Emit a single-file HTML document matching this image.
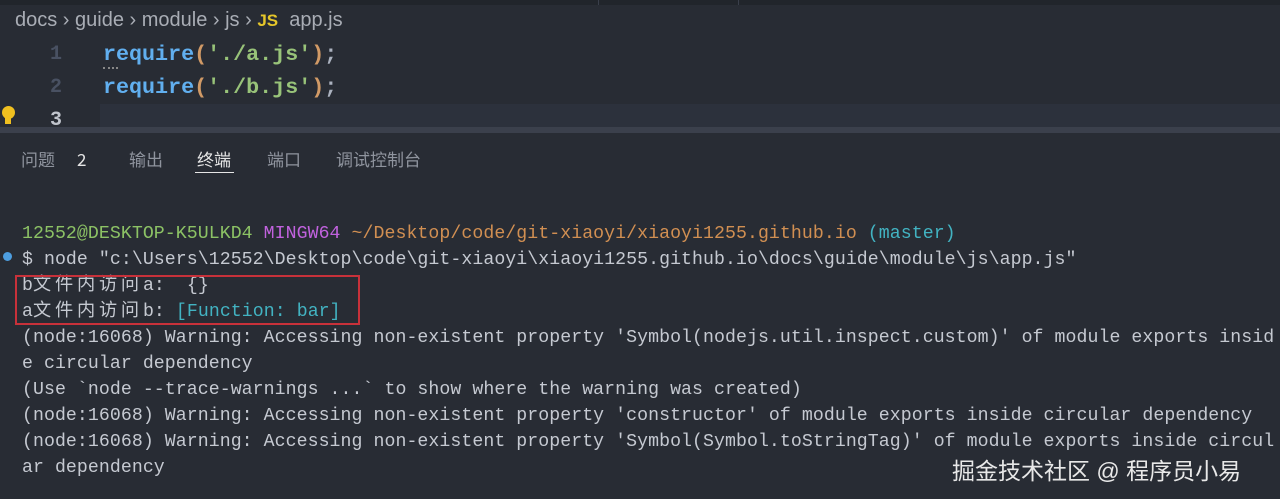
<!DOCTYPE html>
<html><head><meta charset="utf-8"><style>
body{margin:0;width:1280px;height:499px;background:#282c34;overflow:hidden;position:relative;font-family:"Liberation Sans","Noto Sans CJK SC",sans-serif}
.top{position:absolute;left:0;top:0;width:1280px;height:5px;background:#21252b}
.top i{position:absolute;top:0;width:1px;height:5px;background:#3a3f4b}
.bc{position:absolute;left:15px;top:9px;font-size:20px;color:#a9adb5;white-space:pre}
.code{position:absolute;font-family:"Liberation Mono",monospace;font-size:21.7px;font-weight:bold;white-space:pre}
.ln{position:absolute;font-family:"Liberation Mono",monospace;font-size:20px;font-weight:bold;color:#495162}
.cur{position:absolute;left:100px;top:104px;width:1180px;height:23px;background:#2c313c}
.sep{position:absolute;left:0;top:127px;width:1280px;height:6px;background:#3b404c}
.tabs{position:absolute;top:146px;font-size:17px;color:#8f949e;font-family:"Noto Sans CJK SC",sans-serif}
.t{position:absolute;font-family:"Liberation Mono","Noto Sans CJK SC",monospace;font-size:18.2px;letter-spacing:0.07px;line-height:26px;color:#c5c9d1;white-space:pre;left:22px}
.z{letter-spacing:3.8px}
</style></head><body>
<div class="top"><i style="left:598px"></i><i style="left:738px"></i></div>
<div class="bc">docs › guide › module › js › <span style="color:#e5c62a;font-weight:bold;font-size:17px">JS</span>  app.js</div>
<div class="cur"></div>
<div class="ln" style="left:50px;top:43px">1</div>
<div class="ln" style="left:50px;top:76px">2</div>
<div class="ln" style="left:50px;top:109px;color:#c0c4cc">3</div>
<div style="position:absolute;left:2px;top:106px;width:13px;height:13px;border-radius:50%;background:#f0c020"></div>
<div style="position:absolute;left:5px;top:117px;width:6px;height:7px;background:#f0c020"></div>
<div class="code" style="left:103px;top:42px"><span style="color:#61afef">require</span><span style="color:#d19a66">(</span><span style="color:#98c379">'./a.js'</span><span style="color:#d19a66">)</span><span style="color:#abb2bf">;</span></div>
<div style="position:absolute;left:103px;top:67px;width:15px;border-top:2px dotted #888"></div>
<div class="code" style="left:103px;top:75px"><span style="color:#61afef">require</span><span style="color:#d19a66">(</span><span style="color:#98c379">'./b.js'</span><span style="color:#d19a66">)</span><span style="color:#abb2bf">;</span></div>
<div class="sep"></div>
<div class="tabs" style="left:21px">问题</div>
<div class="tabs" style="left:77px;color:#e6e6e6">2</div>
<div class="tabs" style="left:129px">输出</div>
<div class="tabs" style="left:197px;color:#e6e6e6">终端</div>
<div style="position:absolute;left:195px;top:172px;width:39px;height:1px;background:#e6e6e6"></div>
<div class="tabs" style="left:267px">端口</div>
<div class="tabs" style="left:336px">调试控制台</div>
<div class="t" style="top:221px"><span style="color:#8cc265">12552@DESKTOP-K5ULKD4</span> <span style="color:#c162de">MINGW64</span> <span style="color:#d18f52">~/Desktop/code/git-xiaoyi/xiaoyi1255.github.io</span> <span style="color:#42b3c2">(master)</span></div>
<div style="position:absolute;left:3px;top:252px;width:9px;height:9px;border-radius:50%;background:#4d9ee0"></div>
<div class="t" style="top:247px">$ node "c:\Users\12552\Desktop\code\git-xiaoyi\xiaoyi1255.github.io\docs\guide\module\js\app.js"</div>
<div class="t" style="top:273px">b<span class="z">文件内访问</span>a:  {}</div>
<div class="t" style="top:299px">a<span class="z">文件内访问</span>b: <span style="color:#42b3c2">[Function: bar]</span></div>
<div style="position:absolute;left:15px;top:275px;width:345px;height:50px;border:2px solid #c8313a;box-sizing:border-box"></div>
<div class="t" style="top:325px">(node:16068) Warning: Accessing non-existent property 'Symbol(nodejs.util.inspect.custom)' of module exports insid</div>
<div class="t" style="top:351px">e circular dependency</div>
<div class="t" style="top:377px">(Use `node --trace-warnings ...` to show where the warning was created)</div>
<div class="t" style="top:403px">(node:16068) Warning: Accessing non-existent property 'constructor' of module exports inside circular dependency</div>
<div class="t" style="top:429px">(node:16068) Warning: Accessing non-existent property 'Symbol(Symbol.toStringTag)' of module exports inside circul</div>
<div class="t" style="top:455px">ar dependency</div>
<div style="position:absolute;left:952px;top:452px;font-size:23px;color:#e8e8e8;white-space:pre">掘金技术社区 @ 程序员小易</div>
</body></html>
